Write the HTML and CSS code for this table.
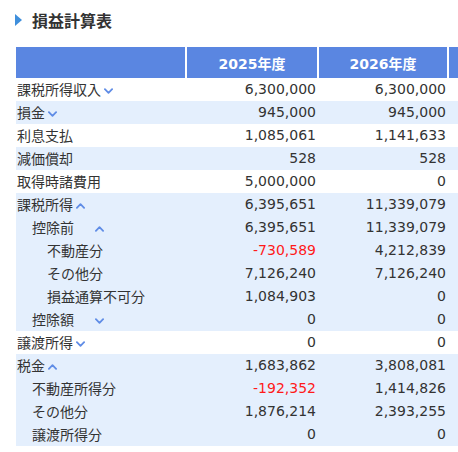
FILE: index.html
```html
<!DOCTYPE html>
<html lang="ja">
<head>
<meta charset="utf-8">
<title>損益計算表</title>
<link rel="stylesheet" href="styles.css">
</head>
<body>
<div class="page">
  <h1 class="title"><span class="tri"></span>損益計算表</h1>
  <div class="wrap">
    <table class="pl">
      <colgroup>
        <col class="c1"><col class="c2"><col class="c3"><col class="c4">
      </colgroup>
      <thead>
        <tr><th></th><th>2025年度</th><th>2026年度</th><th></th></tr>
      </thead>
      <tbody>
        <tr><td class="lbl">課税所得収入<svg class="chev" viewBox="0 0 10 6"><path d="M1 1 L5 5 L9 1"/></svg></td><td>6,300,000</td><td>6,300,000</td><td></td></tr>
        <tr class="alt"><td class="lbl">損金<svg class="chev" viewBox="0 0 10 6"><path d="M1 1 L5 5 L9 1"/></svg></td><td>945,000</td><td>945,000</td><td></td></tr>
        <tr><td class="lbl">利息支払</td><td>1,085,061</td><td>1,141,633</td><td></td></tr>
        <tr class="alt"><td class="lbl">減価償却</td><td>528</td><td>528</td><td></td></tr>
        <tr><td class="lbl">取得時諸費用</td><td>5,000,000</td><td>0</td><td></td></tr>
        <tr class="alt"><td class="lbl">課税所得<svg class="chev" viewBox="0 0 10 6"><path d="M1 5 L5 1 L9 5"/></svg></td><td>6,395,651</td><td>11,339,079</td><td></td></tr>
        <tr class="alt"><td class="lbl i1"><span class="fix">控除前</span><svg class="chev" viewBox="0 0 10 6"><path d="M1 5 L5 1 L9 5"/></svg></td><td>6,395,651</td><td>11,339,079</td><td></td></tr>
        <tr class="alt"><td class="lbl i2">不動産分</td><td class="neg">-730,589</td><td>4,212,839</td><td></td></tr>
        <tr class="alt"><td class="lbl i2">その他分</td><td>7,126,240</td><td>7,126,240</td><td></td></tr>
        <tr class="alt"><td class="lbl i2">損益通算不可分</td><td>1,084,903</td><td>0</td><td></td></tr>
        <tr class="alt"><td class="lbl i1"><span class="fix">控除額</span><svg class="chev" viewBox="0 0 10 6"><path d="M1 1 L5 5 L9 1"/></svg></td><td>0</td><td>0</td><td></td></tr>
        <tr><td class="lbl">譲渡所得<svg class="chev" viewBox="0 0 10 6"><path d="M1 1 L5 5 L9 1"/></svg></td><td>0</td><td>0</td><td></td></tr>
        <tr class="alt"><td class="lbl">税金<svg class="chev" viewBox="0 0 10 6"><path d="M1 5 L5 1 L9 5"/></svg></td><td>1,683,862</td><td>3,808,081</td><td></td></tr>
        <tr class="alt"><td class="lbl i1">不動産所得分</td><td class="neg">-192,352</td><td>1,414,826</td><td></td></tr>
        <tr class="alt"><td class="lbl i1">その他分</td><td>1,876,214</td><td>2,393,255</td><td></td></tr>
        <tr class="alt"><td class="lbl i1">譲渡所得分</td><td>0</td><td>0</td><td></td></tr>
      </tbody>
    </table>
  </div>
</div>
</body>
</html>
```
FILE: styles.css
```css
html, body {
  margin: 0;
  padding: 0;
  background: #ffffff;
}
body {
  font-family: "DejaVu Sans", "Noto Sans CJK JP", sans-serif;
  color: #333333;
}
.page {
  padding-left: 16px;
  overflow: hidden;
  width: 442px;
}
.title {
  margin: 0;
  padding: 10px 0 0 0;
  margin-left: -1px;
  height: 20px;
  line-height: 20px;
  font-family: "Noto Sans CJK JP", sans-serif;
  font-size: 16px;
  font-weight: bold;
  color: #333333;
  display: flex;
  align-items: center;
  margin-bottom: 17px;
}
.tri {
  width: 0;
  height: 0;
  border-top: 6px solid transparent;
  border-bottom: 6px solid transparent;
  border-left: 7px solid #3f8fdc;
  margin-right: 10px;
  margin-top: -1px;
}
.wrap {
  width: 442px;
  overflow: hidden;
}
.pl {
  border-collapse: separate;
  border-spacing: 0;
  table-layout: fixed;
  width: 560px;
}
.c1 { width: 169px; }
.c2 { width: 132px; }
.c3 { width: 130px; }
.c4 { width: 129px; }
.pl th {
  background: #5a86e1;
  color: #ffffff;
  height: 31px;
  padding: 0;
  font-family: "DejaVu Sans", "Noto Sans CJK JP", sans-serif;
  font-size: 14px;
  font-weight: bold;
  text-align: center;
}
.pl th + th {
  border-left: 2px solid #ffffff;
}
.pl td {
  height: 23px;
  padding: 0 1px 0 0;
  font-size: 14px;
  line-height: 23px;
  text-align: right;
  white-space: nowrap;
}
.pl tr.alt td {
  background: #e4effd;
}
.pl td.lbl {
  text-align: left;
  padding-left: 1px;
  font-family: "Noto Sans CJK JP", sans-serif;
}
.pl td.i1 { padding-left: 16px; }
.pl td.i2 { padding-left: 31px; }
.fix {
  display: inline-block;
  width: 60px;
}
.neg { color: #ff1a1a; }
.chev {
  width: 9px;
  height: 6px;
  margin-left: 3px;
  vertical-align: 1px;
  fill: none;
  stroke: #5f8ce6;
  stroke-width: 2;
  stroke-linecap: round;
  stroke-linejoin: round;
}
```
